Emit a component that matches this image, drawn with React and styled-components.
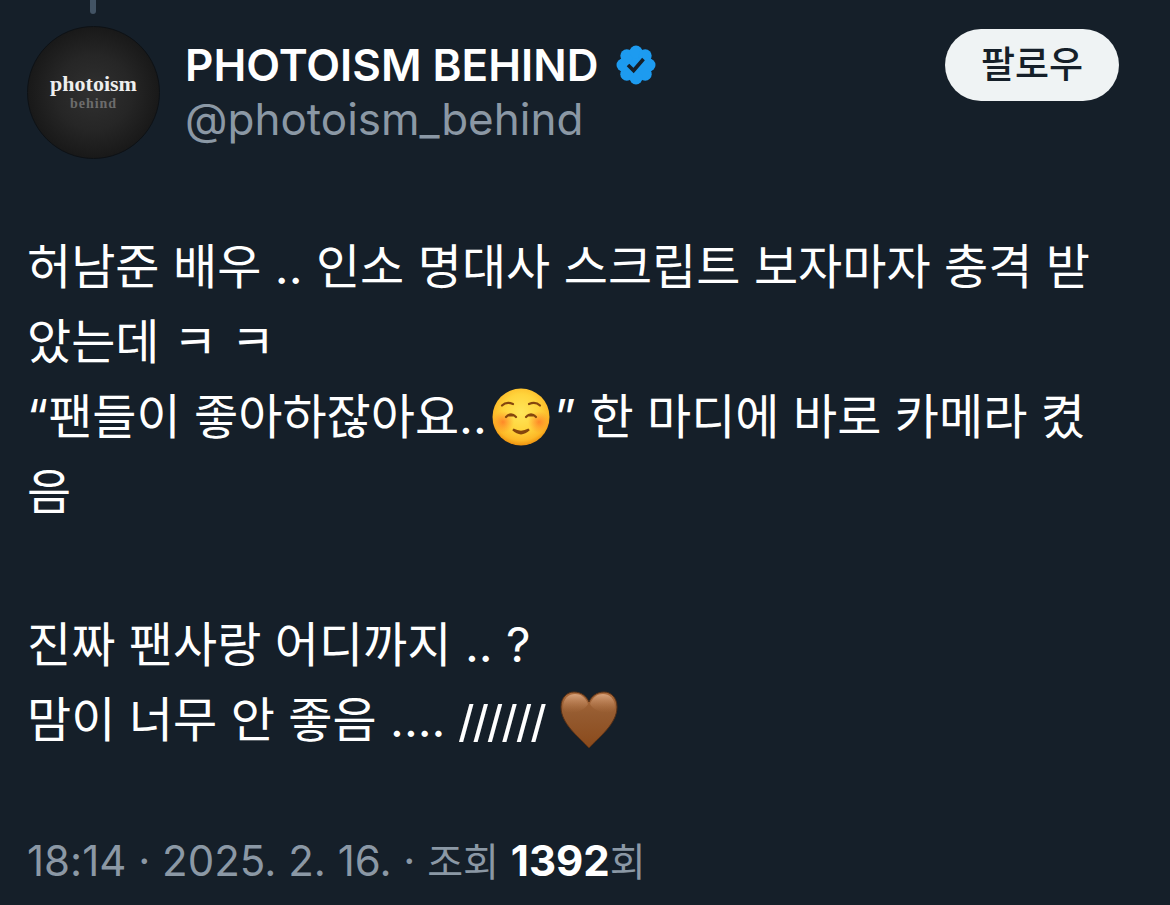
import React from 'react';
import styled, { createGlobalStyle } from 'styled-components';

const GlobalStyle = createGlobalStyle`
  *, *::before, *::after { box-sizing: border-box; }
  body {
    margin: 0;
    background: #151f29;
    color: #ffffff;
    font-family: Inter, "Noto Sans CJK KR", sans-serif;
  }
`;

const Post = styled.article`
  min-height: 100vh;
  padding: 0 51px 16px 27px;
  background: #151f29;
`;

const ThreadLine = styled.div`
  width: 6px;
  height: 14px;
  margin-left: 63px;
  border-radius: 0 0 3px 3px;
  background: #425364;
`;

const Header = styled.header`
  display: flex;
  align-items: flex-start;
  margin-top: 12px;
`;

const Avatar = styled.div`
  flex: none;
  display: flex;
  flex-direction: column;
  align-items: center;
  justify-content: center;
  width: 133px;
  height: 133px;
  border: 1px solid #0d1115;
  border-radius: 50%;
  background: radial-gradient(circle, #303030 0%, #262626 40%, #171717 75%);
  font-family: "Liberation Serif", serif;
  font-weight: 700;
`;

const AvatarTitle = styled.span`
  font-size: 22px;
  line-height: 22px;
  color: #eeeeee;
`;

const AvatarSubtitle = styled.span`
  font-size: 14px;
  line-height: 18px;
  letter-spacing: 1px;
  color: #6c6c6c;
`;

const Identity = styled.div`
  flex: 1;
  min-width: 0;
  margin: 12px 24px 0 25px;
`;

const NameRow = styled.div`
  display: flex;
  align-items: center;
  gap: 18px;
`;

const Name = styled.h1`
  margin: 0;
  font-size: 44px;
  line-height: 54px;
  font-weight: 600;
  white-space: nowrap;
`;

const Badge = styled.svg`
  flex: none;
  width: 40px;
  height: 40px;
`;

const Handle = styled.a`
  display: block;
  font-size: 44px;
  line-height: 54px;
  color: #8b98a5;
  text-decoration: none;
`;

const FollowButton = styled.button`
  flex: none;
  width: 174px;
  height: 72px;
  margin-top: 3px;
  padding: 0;
  border: 0;
  border-radius: 36px;
  background: #eff3f4;
  color: #151f29;
  font-family: inherit;
  font-size: 37px;
  line-height: 54px;
  font-weight: 500;
  cursor: pointer;
`;

const Body = styled.div`
  display: flex;
  flex-direction: column;
  gap: 78px;
  margin-top: 70px;
`;

const Paragraph = styled.p`
  margin: 0;
  font-size: 48px;
  line-height: 75px;
`;

const Slashes = styled.span`
  font-family: "Liberation Sans", sans-serif;
  font-size: 52px;
  line-height: 54px;
  vertical-align: -5px;
`;

const Emoji = styled.svg`
  width: 60px;
  height: 60px;
  margin: 0 4px;
  vertical-align: -13px;
`;

const HeartIcon = styled(Emoji)`
  margin: 0;
`;

const Meta = styled.footer`
  margin-top: 77px;
  font-size: 42px;
  line-height: 54px;
  color: #8b98a5;
`;

const MetaLabel = styled.span`
  font-size: 39px;
`;

const Count = styled.strong`
  font-weight: 700;
  color: #ffffff;
`;

function VerifiedBadge() {
  const lobes = Array.from({ length: 8 }, (_, i) => {
    const a = (i * Math.PI) / 4;
    return <circle key={i} cx={20 + 13 * Math.cos(a)} cy={20 + 13 * Math.sin(a)} r="6.5" />;
  });
  return (
    <Badge viewBox="0 0 40 40" role="img" aria-label="인증된 계정">
      <g fill="#1d9bf0">
        <circle cx="20" cy="20" r="16" />
        {lobes}
      </g>
      <path d="M12 20l5.600 5.500L27.500 14" fill="none" stroke="#151f29" strokeWidth="3.6" />
    </Badge>
  );
}

function SmileEmoji() {
  return (
    <Emoji viewBox="0 0 60 60" role="img" aria-label="미소">
      <defs>
        <radialGradient id="face" cx="50%" cy="42%" r="58%">
          <stop offset="0" stopColor="#ffe65a" />
          <stop offset="0.55" stopColor="#ffd43c" />
          <stop offset="0.85" stopColor="#fdb827" />
          <stop offset="1" stopColor="#ee920f" />
        </radialGradient>
        <radialGradient id="blush">
          <stop offset="0" stopColor="#ff6a22" stopOpacity="0.7" />
          <stop offset="1" stopColor="#ff7a22" stopOpacity="0" />
        </radialGradient>
      </defs>
      <circle cx="30" cy="30" r="28.5" fill="url(#face)" />
      <circle cx="12" cy="35" r="11" fill="url(#blush)" />
      <circle cx="48" cy="35" r="11" fill="url(#blush)" />
      <g fill="none" stroke="#85460d" strokeWidth="2.2" strokeLinecap="round">
        <path d="M11 18.500Q15.500 14 22 17" />
        <path d="M49 18.500Q44.500 14 38 17" />
        <path d="M15 30Q20 24.500 25 30M16.500 28.500H23.500" />
        <path d="M35 30Q40 24.500 45 30M36.500 28.500H43.500" />
        <path d="M22 42.500Q30 50 38 42.500Q30 47 22 42.500Z" fill="#85460d" />
      </g>
    </Emoji>
  );
}

function HeartEmoji() {
  return (
    <HeartIcon viewBox="0 0 60 60" role="img" aria-label="갈색 하트">
      <defs>
        <linearGradient id="heart" x1="0" y1="0" x2="0" y2="1">
          <stop offset="0" stopColor="#a8693b" />
          <stop offset="0.4" stopColor="#955b30" />
          <stop offset="1" stopColor="#8a4a1b" />
        </linearGradient>
        <linearGradient id="gloss" x1="0" y1="0" x2="0" y2="1">
          <stop offset="0" stopColor="#dca882" stopOpacity="0.9" />
          <stop offset="1" stopColor="#b5784b" stopOpacity="0" />
        </linearGradient>
      </defs>
      <path
        d="M30 58C20 47 2 34 2 17C2 7.500 8 2 15 2C22 2 27.500 6 30 12C32.500 6 38 2 45 2C52 2 58 7.500 58 17C58 34 40 47 30 58Z"
        fill="url(#heart)"
        stroke="#573016"
        strokeWidth="1"
      />
      <path d="M4 18C4 8 10 4 16 4C22 4 26 7 29 14C25 22 7 27 4 18Z" fill="url(#gloss)" />
      <path d="M56 18C56 8 50 4 44 4C38 4 34 7 31 14C35 22 53 27 56 18Z" fill="url(#gloss)" />
    </HeartIcon>
  );
}

export default function App() {
  return (
    <>
      <GlobalStyle />
      <Post lang="ko">
        <ThreadLine />
        <Header>
          <Avatar>
            <AvatarTitle>photoism</AvatarTitle>
            <AvatarSubtitle>behind</AvatarSubtitle>
          </Avatar>
          <Identity>
            <NameRow>
              <Name>PHOTOISM BEHIND</Name>
              <VerifiedBadge />
            </NameRow>
            <Handle href="#photoism_behind">@photoism_behind</Handle>
          </Identity>
          <FollowButton type="button">팔로우</FollowButton>
        </Header>
        <Body>
          <Paragraph>
            허남준 배우 .. 인소 명대사 스크립트 보자마자 충격 받았는데 ㅋ ㅋ
            <br />
            “팬들이 좋아하잖아요..
            <SmileEmoji />” 한 마디에 바로 카메라 켰음
          </Paragraph>
          <Paragraph>
            진짜 팬사랑 어디까지 .. ?
            <br />
            맘이 너무 안 좋음 .... <Slashes>//////</Slashes> <HeartEmoji />
          </Paragraph>
        </Body>
        <Meta>
          18:14 · 2025. 2. 16. · <MetaLabel>조회</MetaLabel> <Count>1392</Count>
          <MetaLabel>회</MetaLabel>
        </Meta>
      </Post>
    </>
  );
}
